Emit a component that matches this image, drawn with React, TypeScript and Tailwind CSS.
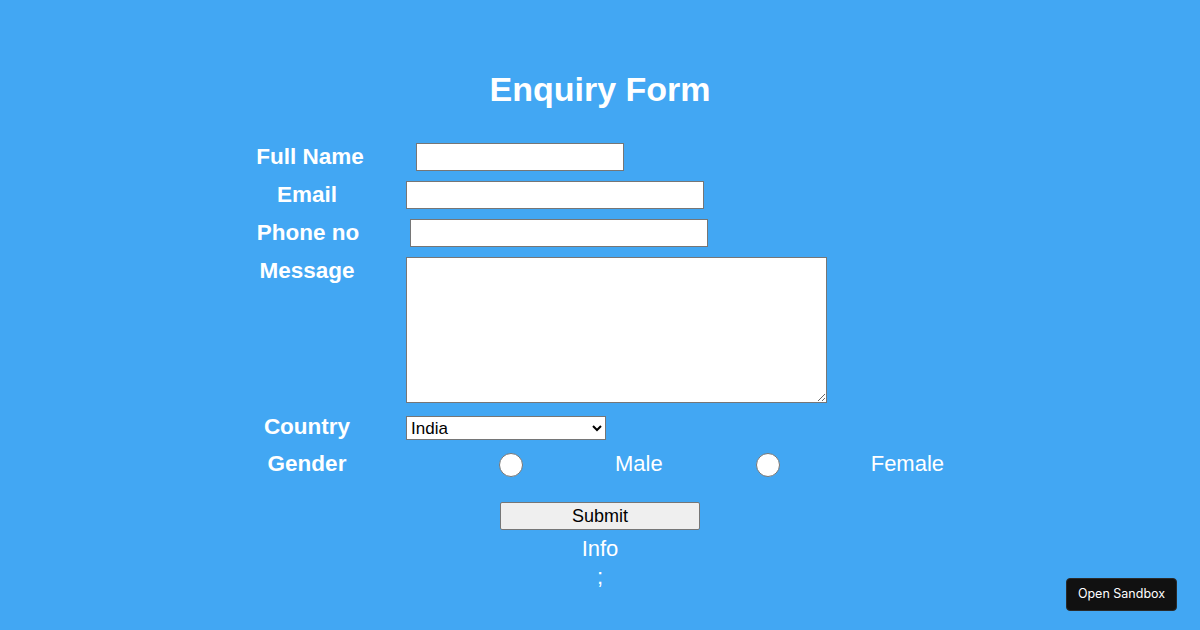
import { useState } from 'react'

const labelCls = 'w-[134px] shrink-0 text-center text-[22.5px] font-bold leading-[26px] text-white'
const inputCls = 'h-[28px] border border-[#767676] bg-white px-1 text-[16px] text-black outline-none'

export default function App() {
  const [gender, setGender] = useState('')

  return (
    <div
      className="relative h-[630px] w-full overflow-hidden bg-[#42a7f3] text-white"
      style={{ fontFamily: '"Liberation Sans", Arial, sans-serif' }}
    >
      <h1 className="pt-[69px] text-center text-[34px] font-bold leading-[40px]">Enquiry Form</h1>

      <form className="mx-auto mt-[34px] flex w-[720px] flex-col" onSubmit={(e) => e.preventDefault()}>
        <div className="flex h-[28px] items-center">
          <label className={labelCls + ' pl-[6px] -mt-[1px]'}>Full Name</label>
          <input type="text" className={inputCls + ' ml-[42px] w-[208px]'} />
        </div>

        <div className="mt-[10px] flex h-[28px] items-center">
          <label className={labelCls + ' -mt-[1px]'}>Email</label>
          <input type="email" className={inputCls + ' ml-[32px] w-[298px]'} />
        </div>

        <div className="mt-[10px] flex h-[28px] items-center">
          <label className={labelCls + ' pl-[2px] -mt-[1px]'}>Phone no</label>
          <input type="tel" className={inputCls + ' ml-[36px] w-[298px]'} />
        </div>

        <div className="mt-[10px] flex items-start">
          <label className={labelCls + ' mt-[1px]'}>Message</label>
          <textarea className="ml-[32px] h-[146px] w-[421px] border border-[#767676] bg-white p-1 text-[16px] text-black outline-none" />
        </div>

        <div className="mt-[13px] flex h-[24px] items-center">
          <label className={labelCls + ' -mt-[3px]'}>Country</label>
          <select
            defaultValue="India"
            className="ml-[32px] h-[24px] w-[200px] border border-[#767676] bg-white pl-0 text-[17px] text-black outline-none"
          >
            <option>India</option>
            <option>USA</option>
            <option>UK</option>
            <option>Canada</option>
            <option>Australia</option>
          </select>
        </div>

        <div className="mt-[13px] flex h-[24px] items-center">
          <label className={labelCls + ' -mt-[3px]'}>Gender</label>
          <input
            type="radio"
            name="gender"
            checked={gender === 'male'}
            onChange={() => setGender('male')}
            className="ml-[125px] h-6 w-6 shrink-0 appearance-none rounded-full border border-[#767676] bg-white checked:border-[6px] checked:border-[#1a73e8]"
          />
          <span className="ml-[92px] -mt-[3px] text-[22px] leading-[26px]">Male</span>
          <input
            type="radio"
            name="gender"
            checked={gender === 'female'}
            onChange={() => setGender('female')}
            className="ml-[93px] h-6 w-6 shrink-0 appearance-none rounded-full border border-[#767676] bg-white checked:border-[6px] checked:border-[#1a73e8]"
          />
          <span className="ml-[91px] -mt-[3px] text-[22px] leading-[26px]">Female</span>
        </div>

        <button
          type="submit"
          className="mx-auto mt-[25px] h-[28px] w-[200px] rounded-[2px] border border-[#767676] bg-[#efefef] text-[18px] leading-[26px] text-black"
        >
          Submit
        </button>

        <p className="mt-[6px] text-center text-[22px] leading-[26px]">Info</p>
        <p className="mt-[2px] text-center text-[22px] leading-[26px]">;</p>
      </form>

      <button
        className="absolute bottom-[19px] right-[23px] h-[33px] w-[111px] rounded-[4px] border border-[#2a2a2a] bg-[#111111] text-[12.5px] text-white"
        style={{ fontFamily: 'Inter, "Noto Sans", sans-serif' }}
      >
        Open Sandbox
      </button>
    </div>
  )
}
